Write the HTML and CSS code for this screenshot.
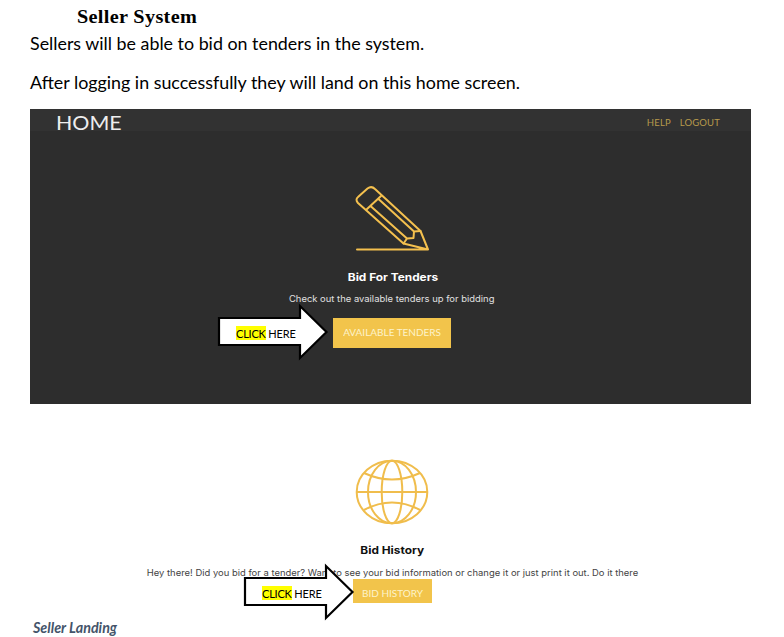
FILE: index.html
```html
<!DOCTYPE html>
<html lang="en">
<head>
<meta charset="utf-8">
<title>Seller System</title>
<link rel="stylesheet" href="styles.css">
</head>
<body>
<main class="document">
  <h1 class="doc-title">Seller System</h1>
  <p class="doc-text first">Sellers will be able to bid on tenders in the system.</p>
  <p class="doc-text second">After logging in successfully they will land on this home screen.</p>
  <div class="app">
    <section class="hero">
      <header class="navbar">
        <span class="brand">HOME</span>
        <nav class="links"><a class="help">HELP</a><a class="logout">LOGOUT</a></nav>
      </header>
      <svg class="pencil" viewBox="0 0 74 66" fill="none" stroke="#f4c04e" stroke-width="2" stroke-linejoin="round" stroke-linecap="round">
        <path d="M2 63.500H73L65.500 45L20 3Q16.500 -.5 12.500 2.500L3 11Q0 13.500 3 17L48.500 57.500L73 63.500"/>
        <path d="M11.500 23.500L26 10M15.500 20L52 52.500M23.500 13L59 45.500M65.500 45L59 45.500L58.500 52L52 52.500L48.500 57.500"/>
      </svg>
      <h2 class="heading tenders-heading">Bid For Tenders</h2>
      <p class="blurb tenders-blurb">Check out the available tenders up for bidding</p>
      <a class="button tenders-button"><span>AVAILABLE TENDERS</span></a>
    </section>
    <section class="history">
      <svg class="globe" viewBox="0 0 74 66" fill="none" stroke="#f0bd4c" stroke-width="2">
        <ellipse cx="37" cy="33" rx="35.3" ry="31.3"/>
        <ellipse cx="37" cy="33" rx="24" ry="31.3"/>
        <ellipse cx="37" cy="33" rx="10.3" ry="31.3"/>
        <path d="M2 33H72M9 14Q37 27 65 14M9 51Q37 36 65 51"/>
      </svg>
      <h2 class="heading history-heading">Bid History</h2>
      <p class="blurb history-blurb">Hey there! Did you bid for a tender? Want to see your bid information or change it or just print it out. Do it there</p>
      <a class="button history-button"><span>BID HISTORY</span></a>
    </section>
    <div class="callout callout-tenders">
      <svg viewBox="0 0 110 56"><path d="M1 14H82V2L108.500 28L82 54V41H1Z" fill="#fff" stroke="#000" stroke-width="2.200"/></svg>
      <span class="callout-label"><mark>CLICK</mark> HERE</span>
    </div>
    <div class="callout callout-history">
      <svg viewBox="0 0 110 56"><path d="M1 14H82V2L108.500 28L82 54V41H1Z" fill="#fff" stroke="#000" stroke-width="2.200"/></svg>
      <span class="callout-label"><mark>CLICK</mark> HERE</span>
    </div>
  </div>
  <p class="caption">Seller Landing</p>
</main>
</body>
</html>
```
FILE: styles.css
```css
* { box-sizing: border-box; }
html, body { margin: 0; background: #fff; }
body { width: 784px; height: 637px; overflow: hidden; }
h1, h2, p { margin: 0; }
.document { width: 721px; margin-left: 30px; display: flex; flex-direction: column; align-items: flex-start; color: #000; }
.doc-title { margin: 5px 0 0 47px; height: 26px; font: bold 19px/24px "Liberation Serif", serif; letter-spacing: .3px; white-space: nowrap; transform: scaleX(1.065); transform-origin: left; }
.doc-text { font: 17.85px/24px Lato, sans-serif; white-space: nowrap; }
.second { margin-top: 15px; }
.first { height: 24px; }
.app { position: relative; width: 721px; height: 509px; margin-top: 15px; font-family: Lato, sans-serif; }
.hero { height: 295px; background: #2d2d2d; color: #fff; display: flex; flex-direction: column; align-items: center; }
.navbar { width: 100%; height: 22px; padding: 0 31px 0 26px; background: #323232; display: flex; justify-content: space-between; align-items: center; }
.brand { font-size: 20px; line-height: 27px; font-weight: 400; color: #eee; padding-top: 4px; transform: scaleX(1.07); transform-origin: left; }
.links { display: flex; gap: 9px; color: #b89a4c; font-size: 9.500px; line-height: 14px; margin-top: 5px; letter-spacing: .15px; }
.pencil, .globe { width: 74px; height: 66px; flex: none; margin-left: 3px; }
.pencil { margin-top: 55px; overflow: visible; }
.heading { font: bold 10.5px/16px Inter, sans-serif; white-space: nowrap; transform: scaleX(1.13); }
.tenders-heading { margin: 18px 0 0 4px; }
.blurb { font: 8.7px/14px Inter, sans-serif; white-space: nowrap; transform: scaleX(1.085); }
.tenders-blurb { margin: 6px 0 0 3px; color: #e0e0e0; }
.button { display: flex; align-items: center; justify-content: center; background: #f2c44b; color: #fdf3ca; font-size: 9px; white-space: nowrap; }
.button span { transform: scaleX(1.11); }
.tenders-button { width: 118px; height: 30px; padding-bottom: 1px; margin: 12px 0 0 3px; }
.history { height: 214px; padding-top: 55px; display: flex; flex-direction: column; align-items: center; color: #111; }
.history-heading { margin: 18px 0 0 4px; }
.history-blurb { margin: 7px 0 0 3px; color: #444; }
.history-button { width: 79px; height: 24px; flex: none; padding-top: 4px; margin: -1px 0 0 3px; }
.callout { position: absolute; width: 110px; height: 56px; color: #000; }
.callout svg { display: block; width: 110px; height: 56px; overflow: visible; }
.callout-tenders { left: 188px; top: 195px; }
.callout-history { left: 214px; top: 455px; }
.callout-label { position: absolute; left: 18px; top: 22px; font: 11px/16px Lato, sans-serif; letter-spacing: -.2px; white-space: nowrap; }
mark { display: inline-block; height: 14px; line-height: 16px; background: #ff0; color: #000; }
.caption { margin: 1px 0 0 3px; font: italic bold 14.3px/18px Lato, sans-serif; color: #44546a; }
```
